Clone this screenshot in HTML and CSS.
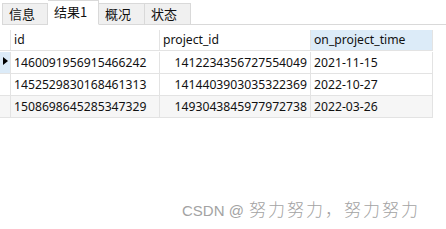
FILE: index.html
```html
<!DOCTYPE html>
<html lang="zh">
<head>
<meta charset="utf-8">
<link rel="stylesheet" href="styles.css">
</head>
<body>
<div class="tabs">
  <div class="tab tab-first">信息</div>
  <div class="tab active">结果1</div>
  <div class="tab">概况</div>
  <div class="tab">状态</div>
  <div class="tab-fill"></div>
</div>
<div class="grid">
  <div class="cell ind"></div>
  <div class="cell head">id</div>
  <div class="cell head">project_id</div>
  <div class="cell head sel">on_project_time</div>

  <div class="cell ind cur"><span class="arrow"></span></div>
  <div class="cell">1460091956915466242</div>
  <div class="cell num">1412234356727554049</div>
  <div class="cell">2021-11-15</div>

  <div class="cell ind"></div>
  <div class="cell">1452529830168461313</div>
  <div class="cell num">1414403903035322369</div>
  <div class="cell">2022-10-27</div>

  <div class="cell ind alt"></div>
  <div class="cell alt">1508698645285347329</div>
  <div class="cell num alt">1493043845977972738</div>
  <div class="cell alt">2022-03-26</div>
</div>
<div class="watermark"><span class="wm-latin">CSDN @</span><span class="wm-cjk">努力努力，努力努力</span></div>
</body>
</html>
```
FILE: styles.css
```css
html, body {
  margin: 0;
  padding: 0;
  background: #ffffff;
}
body {
  width: 446px;
  height: 229px;
  overflow: hidden;
  font-family: "Noto Sans", "Noto Sans CJK SC", sans-serif;
  color: #111;
}
.tabs {
  display: flex;
  align-items: flex-end;
  height: 25px;
  padding-left: 2px;
}
.tab {
  box-sizing: border-box;
  height: 22px;
  width: 46px;
  background: #f0f0f0;
  border: 1px solid #d9d9d9;
  border-left: none;
  border-bottom: 1px solid #d9d9d9;
  font-family: "Noto Sans CJK SC", sans-serif;
  font-size: 13px;
  line-height: 20px;
  padding-left: 6px;
  color: #111;
}
.tab-first {
  border-left: 1px solid #d9d9d9;
}
.tab.active {
  height: 25px;
  width: 51px;
  background: #ffffff;
  border-bottom: 1px solid #ffffff;
  padding-left: 6px;
  line-height: 22px;
}
.tab-fill {
  flex: 1;
  height: 1px;
  background: #d9d9d9;
}
.grid {
  margin-top: 5px;
  display: grid;
  grid-template-columns: 11px 149px 151px 122px;
  grid-auto-rows: 22px;
  width: 433px;
}
.cell {
  box-sizing: border-box;
  border-right: 1px solid #e3e3e3;
  border-bottom: 1px solid #e3e3e3;
  font-size: 12.2px;
  line-height: 21px;
  padding-left: 3px;
  padding-right: 3px;
  white-space: nowrap;
  overflow: hidden;
}
.grid > .cell:nth-child(-n+4) {
  height: 21px;
  line-height: 20px;
}
.cell.num {
  text-align: right;
}
.cell.ind {
  padding: 0;
}
.cell.sel {
  background: #dcebf8;
}
.cell.cur {
  background: #dcebf8;
}
.cell.alt {
  background: #f6f6f6;
}
.arrow {
  display: block;
  width: 0;
  height: 0;
  margin: 5px 0 0 3px;
  border-top: 4.5px solid transparent;
  border-bottom: 4.5px solid transparent;
  border-left: 5px solid #000;
}
.watermark {
  position: absolute;
  left: 182px;
  top: 196px;
  color: #a3a3a3;
  white-space: nowrap;
}
.wm-latin {
  font-family: "Liberation Sans", sans-serif;
  font-size: 15px;
}
.wm-cjk {
  font-family: "Noto Sans CJK SC", sans-serif;
  font-size: 17px;
  letter-spacing: 2px;
  margin-left: 5px;
  font-weight: 300;
}
```
